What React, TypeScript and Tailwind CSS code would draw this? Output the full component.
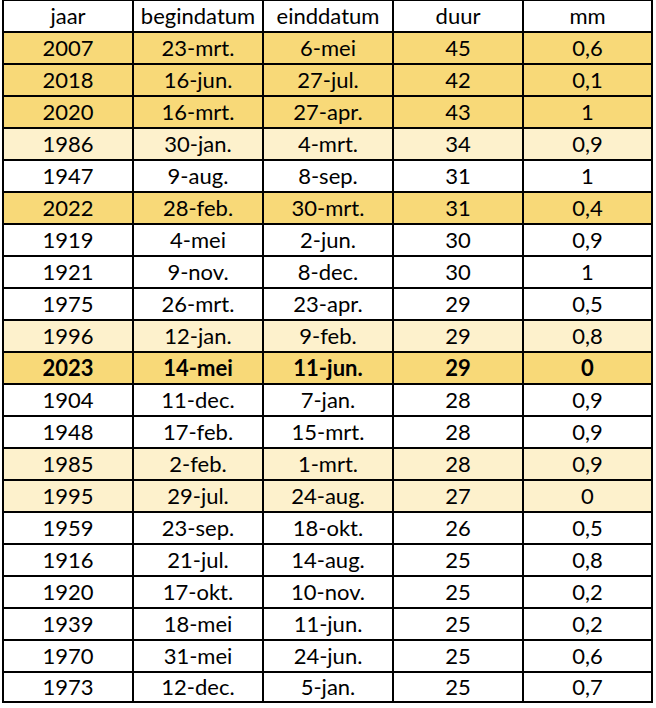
import React from "react";

type Row = [string, string, string, string, string, "d" | "l" | "w" | "b"];

const rows: Row[] = [
  ["2007", "23-mrt.", "6-mei", "45", "0,6", "d"],
  ["2018", "16-jun.", "27-jul.", "42", "0,1", "d"],
  ["2020", "16-mrt.", "27-apr.", "43", "1", "d"],
  ["1986", "30-jan.", "4-mrt.", "34", "0,9", "l"],
  ["1947", "9-aug.", "8-sep.", "31", "1", "w"],
  ["2022", "28-feb.", "30-mrt.", "31", "0,4", "d"],
  ["1919", "4-mei", "2-jun.", "30", "0,9", "w"],
  ["1921", "9-nov.", "8-dec.", "30", "1", "w"],
  ["1975", "26-mrt.", "23-apr.", "29", "0,5", "w"],
  ["1996", "12-jan.", "9-feb.", "29", "0,8", "l"],
  ["2023", "14-mei", "11-jun.", "29", "0", "b"],
  ["1904", "11-dec.", "7-jan.", "28", "0,9", "w"],
  ["1948", "17-feb.", "15-mrt.", "28", "0,9", "w"],
  ["1985", "2-feb.", "1-mrt.", "28", "0,9", "l"],
  ["1995", "29-jul.", "24-aug.", "27", "0", "l"],
  ["1959", "23-sep.", "18-okt.", "26", "0,5", "w"],
  ["1916", "21-jul.", "14-aug.", "25", "0,8", "w"],
  ["1920", "17-okt.", "10-nov.", "25", "0,2", "w"],
  ["1939", "18-mei", "11-jun.", "25", "0,2", "w"],
  ["1970", "31-mei", "24-jun.", "25", "0,6", "w"],
  ["1973", "12-dec.", "5-jan.", "25", "0,7", "w"],
];

const header = ["jaar", "begindatum", "einddatum", "duur", "mm"];

function bgFor(k: Row[5]) {
  if (k === "d" || k === "b") return "bg-[#f8d978]";
  if (k === "l") return "bg-[#fdf1cc]";
  return "bg-white";
}

export default function App() {
  return (
    <div className="w-[656px] h-[708px] bg-white overflow-hidden">
      <div
        className="ml-[2px] mt-[-1px] inline-grid grid-cols-[128px_128px_128px_128px_127px] grid-rows-[repeat(21,30px)_28px] gap-[2px] p-[2px] bg-black text-black text-[22px] leading-none"
        style={{ fontFamily: "Lato, 'Open Sans', sans-serif" }}
      >
        {header.map((h) => (
          <div key={h} className="bg-white flex items-center justify-center">
            {h}
          </div>
        ))}
        {rows.map((r) =>
          r.slice(0, 5).map((c, i) => (
            <div
              key={r[0] + i}
              className={`${bgFor(r[5])} flex items-center justify-center ${
                r[5] === "b" ? "font-bold" : ""
              }`}
            >
              {c}
            </div>
          ))
        )}
      </div>
    </div>
  );
}
